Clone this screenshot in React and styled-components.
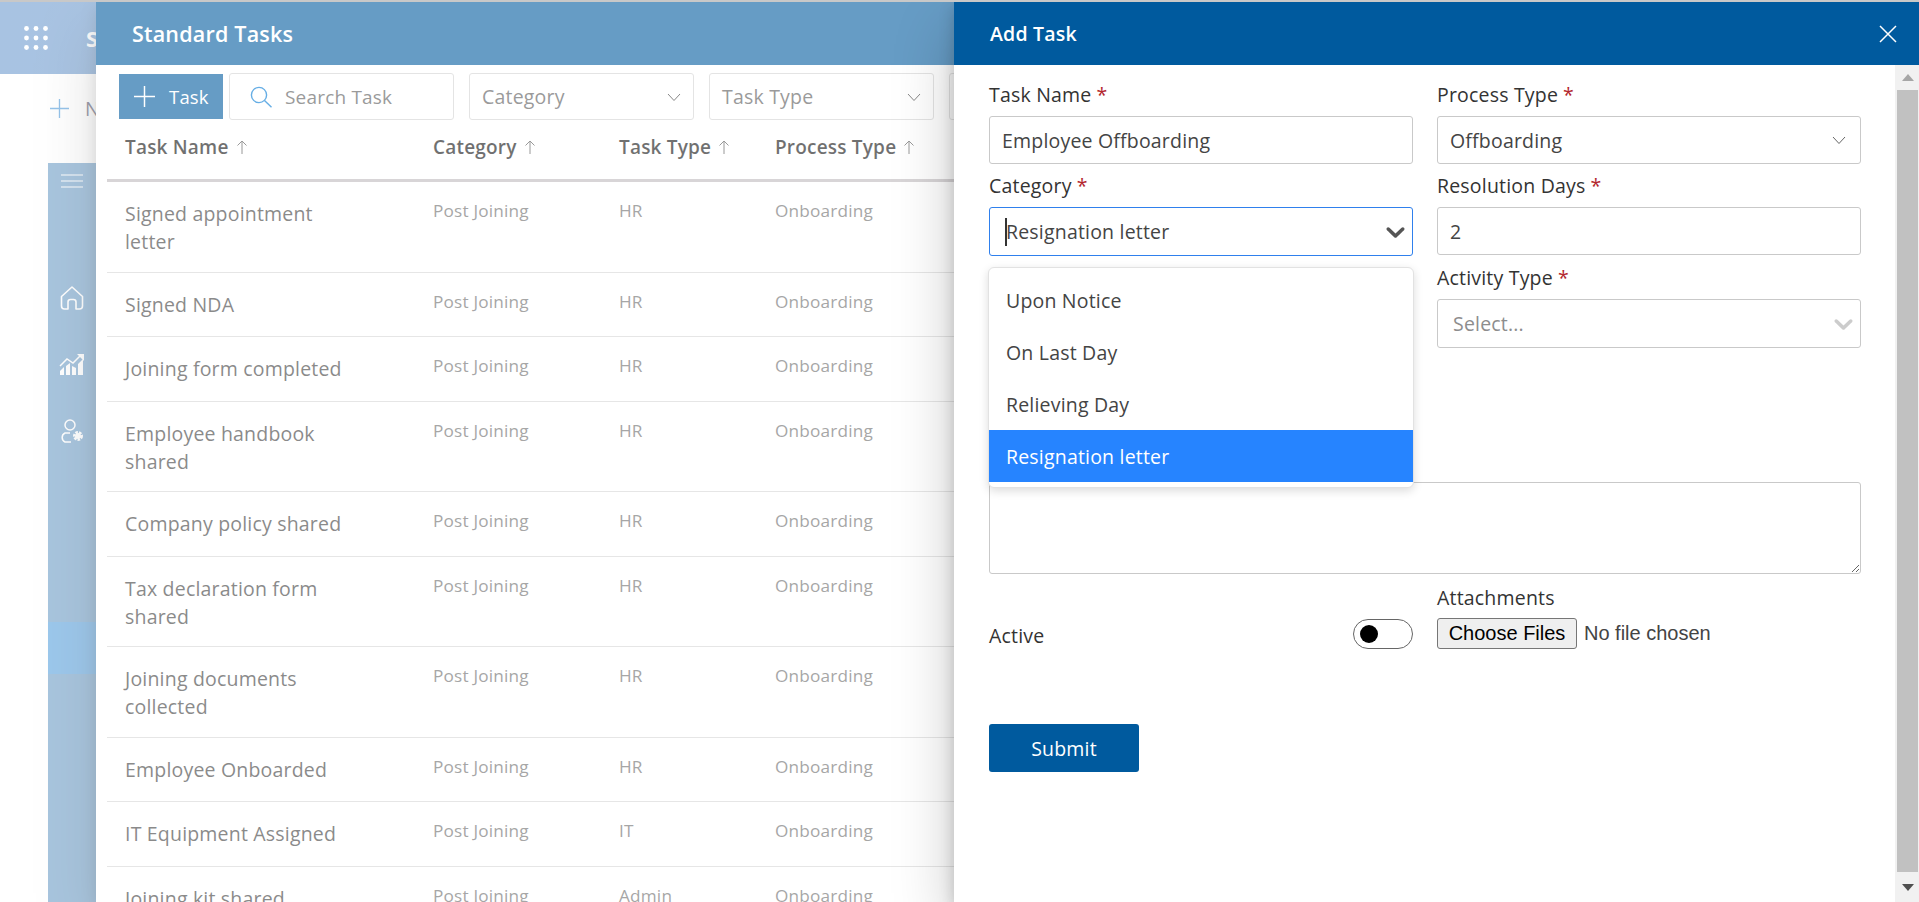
import styled, { createGlobalStyle } from 'styled-components';

const GlobalStyle = createGlobalStyle`
  * {
    box-sizing: border-box;
  }
  html,
  body {
    margin: 0;
    padding: 0;
    height: 100%;
    overflow: hidden;
    background: #fff;
    font-family: 'Open Sans', 'Noto Sans', sans-serif;
  }
`;

const FONT_SPACING = '0.012em';
const TEXT_SIZE = '19.5px';
const BRAND = '#005a9e';

const Page = styled.div`
  position: relative;
  width: 100%;
  height: 100vh;
  overflow: hidden;
  border-top: 2px solid #c8c8c8;
  display: flex;
  flex-direction: column;
  letter-spacing: ${FONT_SPACING};
`;

const AppBar = styled.div`
  height: 72px;
  flex: none;
  display: flex;
  align-items: center;
  gap: 38px;
  padding-left: 24px;
  background: linear-gradient(100deg, #6e9bcf, #8fb1da);
  color: #fff;
  font-weight: 700;
  font-size: 22px;
`;

const SubBar = styled.div`
  height: 89px;
  flex: none;
  display: flex;
  align-items: center;
  gap: 16px;
  padding: 0 0 20px 50px;
  color: #57576e;
  font-size: ${TEXT_SIZE};
`;

const SideRail = styled.div`
  flex: 1;
  width: 48px;
  margin-left: 48px;
  padding-top: 11px;
  background: #6e9ec8;
  display: flex;
  flex-direction: column;
`;

const RailToggle = styled.div`
  display: flex;
  justify-content: center;
  height: 14px;
  margin-bottom: 77px;
`;

const RailItem = styled.div`
  height: 66.5px;
  display: flex;
  align-items: center;
  justify-content: center;
`;

const RailActive = styled.div`
  height: 52px;
  margin-top: 157px;
  background: #5aa2df;
`;

const Panel = styled.section`
  position: absolute;
  top: 0;
  bottom: 0;
  left: ${(p) => p.$left}px;
  right: 0;
  background: #fff;
  display: flex;
  flex-direction: column;
  box-shadow: 0 25.6px 57.6px 0 rgba(0, 0, 0, 0.22), 0 4.8px 14.4px 0 rgba(0, 0, 0, 0.18);
`;

// white veil that the top panel puts over everything below it
const Scrim = styled.div`
  position: absolute;
  inset: 0;
  background: rgba(255, 255, 255, 0.4);
`;

const PanelHeader = styled.header`
  height: 63px;
  flex: none;
  display: flex;
  align-items: center;
  justify-content: space-between;
  padding: 0 ${(p) => p.$padRight}px 0 36px;
  background: ${BRAND};
  color: #fff;
`;

const PanelTitle = styled.h2`
  margin: 0;
  font-size: ${(p) => p.$size}px;
  font-weight: 600;
  line-height: 28px;
`;

const Toolbar = styled.div`
  display: flex;
  align-items: center;
  height: 47px;
  margin-top: 8px;
  padding-left: 23px;
`;

const AddButton = styled.button`
  width: 104px;
  height: 45px;
  margin-right: 6px;
  padding: 0 0 0 15px;
  border: 0;
  background: ${BRAND};
  color: #fff;
  font: inherit;
  font-size: 18.5px;
  letter-spacing: inherit;
  display: flex;
  align-items: center;
  gap: 14px;
`;

const SearchBox = styled.label`
  width: 225px;
  height: 47px;
  margin-right: 15px;
  padding-left: 20px;
  border: 1px solid #d2d2d2;
  border-radius: 3px;
  display: flex;
  align-items: center;
  gap: 13px;
`;

const SearchInput = styled.input`
  flex: 1;
  min-width: 0;
  border: 0;
  outline: 0;
  padding: 0;
  font: inherit;
  font-size: 19px;
  letter-spacing: inherit;
  &::placeholder {
    color: #575757;
    opacity: 1;
  }
`;

const FilterBox = styled.div`
  width: 225px;
  height: 47px;
  flex: none;
  margin-right: 15px;
  padding: 0 11px 0 12px;
  border: 1px solid #d2d2d2;
  border-radius: 3px;
  display: flex;
  align-items: center;
  justify-content: space-between;
  color: #575757;
  font-size: ${TEXT_SIZE};
`;

const Table = styled.div`
  margin-left: 11px;
  width: 848px;
`;

const Row = styled.div`
  display: grid;
  grid-template-columns: 308px 186px 156px 1fr;
  padding-left: 18px;
  min-height: 64.6px;
  border-bottom: 1px solid #d5d5d5;
`;

const HeadRow = styled(Row)`
  min-height: 0;
  height: 62px;
  align-items: center;
  padding-bottom: 6px;
  border-bottom: 3px solid #bfb9bc;
`;

const HeadCell = styled.div`
  display: flex;
  align-items: center;
  gap: 7px;
  color: #111;
  font-size: 19px;
  font-weight: 600;
`;

const NameCell = styled.div`
  width: 232px;
  padding: 18px 0 15.5px;
  color: #3c3c3c;
  font-size: ${TEXT_SIZE};
  line-height: 28px;
`;

const MetaCell = styled.div`
  padding-top: 17px;
  color: #6b6b6b;
  font-size: 17.2px;
  line-height: 24px;
`;

const PanelBody = styled.div`
  flex: 1;
  min-height: 0;
  display: flex;
`;

const Form = styled.form`
  flex: 1;
  min-width: 0;
  padding: 17px 0 0 35px;
`;

const FormGrid = styled.div`
  display: grid;
  grid-template-columns: 424px 424px;
  column-gap: 24px;
  row-gap: 9px;
`;

const Label = styled.label`
  display: block;
  margin-bottom: 8px;
  color: #333;
  font-size: ${TEXT_SIZE};
  font-weight: 500;
  line-height: 26px;
`;

const Required = styled.span`
  color: #b3262e;
  margin-left: 5px;
`;

const TextInput = styled.input`
  display: block;
  width: 100%;
  height: 48px;
  padding: 0 12px;
  border: 1px solid #c9c9c9;
  border-radius: 3px;
  outline: 0;
  color: #444;
  font: inherit;
  font-size: ${TEXT_SIZE};
  letter-spacing: inherit;
`;

const SelectBox = styled.div`
  height: ${(p) => (p.$tall ? 49 : 48)}px;
  padding: 0 ${(p) => p.$padRight}px 0 ${(p) => p.$padLeft}px;
  border: 1px solid ${(p) => (p.$focused ? '#2f80ed' : '#c9c9c9')};
  border-radius: 3px;
  display: flex;
  align-items: center;
  justify-content: space-between;
  color: ${(p) => (p.$muted ? '#8d8d8d' : '#444')};
  font-size: ${TEXT_SIZE};
`;

const Caret = styled.span`
  display: inline-block;
  width: 2px;
  height: 28px;
  margin-right: -1px;
  background: #333;
`;

const SelectValue = styled.span`
  display: flex;
  align-items: center;
`;

const Menu = styled.ul`
  position: absolute;
  top: 265px;
  left: 34px;
  width: 426px;
  height: 221px;
  margin: 0;
  padding: 6px 0;
  list-style: none;
  background: #fff;
  border: 1px solid #e2e2e2;
  border-radius: 6px;
  box-shadow: 0 3px 10px rgba(0, 0, 0, 0.14);
`;

const MenuItem = styled.li`
  height: 52px;
  padding-left: 17px;
  display: flex;
  align-items: center;
  color: ${(p) => (p.$selected ? '#fff' : '#444')};
  background: ${(p) => (p.$selected ? '#2684ff' : 'transparent')};
  font-size: ${TEXT_SIZE};
`;

const TextArea = styled.textarea`
  display: block;
  width: 872px;
  height: 92px;
  margin-top: 134px;
  border: 1px solid #c9c9c9;
  border-radius: 3px;
  outline: 0;
  resize: both;
`;

const BottomGrid = styled(FormGrid)`
  margin-top: 11px;
  align-items: end;
`;

const ActiveRow = styled.div`
  height: 31px;
  display: flex;
  align-items: center;
  justify-content: space-between;
  color: #333;
  font-size: ${TEXT_SIZE};
  font-weight: 500;
`;

const ActiveLabel = styled.span`
  padding-top: 3px;
`;

const Toggle = styled.span`
  width: 60px;
  height: 30px;
  padding-left: 6px;
  border: 1px solid #666;
  border-radius: 15px;
  display: flex;
  align-items: center;
`;

const ToggleDot = styled.span`
  width: 18px;
  height: 18px;
  border-radius: 50%;
  background: #000;
`;

const AttachLabel = styled(Label)`
  margin-bottom: 7px;
`;

const FileInput = styled.input`
  display: block;
  width: 424px;
  height: 31px;
  color: #444;
  font-family: 'Liberation Sans', Arial, sans-serif;
  font-size: 20px;
  letter-spacing: 0;
  &::file-selector-button {
    width: 140px;
    height: 31px;
    margin-right: 7px;
    padding: 0;
    border: 1px solid #767676;
    border-radius: 3px;
    background: #efefef;
    color: #000;
    font: inherit;
  }
`;

const SubmitButton = styled.button`
  display: block;
  width: 150px;
  height: 48px;
  margin-top: 75px;
  border: 0;
  border-radius: 3px;
  background: ${BRAND};
  color: #fff;
  font: inherit;
  font-size: 19.5px;
  letter-spacing: inherit;
`;

const ScrollTrack = styled.div`
  width: 24px;
  flex: none;
  display: flex;
  flex-direction: column;
  padding-left: 2px;
  background: #f1f1f1;
`;

const ScrollArrow = styled.div`
  height: ${(p) => p.$h}px;
  flex: none;
  display: flex;
  align-items: center;
  justify-content: center;
`;

const ScrollThumb = styled.div`
  flex: 1;
  margin-right: 1px;
  background: #c1c1c1;
`;

const Chevron = ({ color }) => (
  <svg width="16" height="16" viewBox="0 0 16 16" fill="none">
    <path d="M2 5l6 6.5L14 5" stroke={color} strokeWidth="1" />
  </svg>
);

const BoldChevron = ({ color }) => (
  <svg width="31" height="31" viewBox="0 0 20 20" fill={color}>
    <path d="M4.516 7.548c0.436-0.446 1.043-0.481 1.576 0l3.908 3.747 3.908-3.747c0.533-0.481 1.141-0.446 1.574 0 0.436 0.445 0.408 1.197 0 1.615-0.406 0.418-4.695 4.502-4.695 4.502-0.217 0.223-0.502 0.335-0.787 0.335s-0.57-0.112-0.789-0.335c0 0-4.287-4.084-4.695-4.502s-0.436-1.17 0-1.615z" />
  </svg>
);

const SortArrow = () => (
  <svg width="12" height="16" viewBox="0 0 12 16" fill="none">
    <path d="M6 15V2M1.5 6.5L6 2l4.500 4.500" stroke="#555" strokeWidth="1" />
  </svg>
);

const PlusIcon = ({ size, color }) => (
  <svg width={size} height={size} viewBox="0 0 20 20" fill="none">
    <path d="M10 0v20M0 10h20" stroke={color} strokeWidth="1.4" />
  </svg>
);

const SearchIcon = () => (
  <svg width="22" height="22" viewBox="0 0 22 22" fill="none" stroke="#0078d4" strokeWidth="1.4">
    <circle cx="9" cy="9" r="7.6" />
    <path d="M14.5 14.5l7 6.8" />
  </svg>
);

const CloseIcon = () => (
  <svg width="18" height="18" viewBox="0 0 18 18" fill="none">
    <path d="M1 1l16 16M17 1L1 17" stroke="#fff" strokeWidth="1.5" />
  </svg>
);

const WaffleIcon = () => (
  <svg width="24" height="24" viewBox="0 0 24 24" fill="#fff">
    {[2.5, 12, 21.5].map((y) =>
      [2.5, 12, 21.5].map((x) => <circle key={`${x}-${y}`} cx={x} cy={y} r="2.4" />)
    )}
  </svg>
);

const MenuIcon = () => (
  <svg width="22" height="14" viewBox="0 0 22 14" stroke="#fff" strokeWidth="1.2">
    <path d="M0 1h22M0 7h22M0 13h22" />
  </svg>
);

const HomeIcon = () => (
  <svg width="24" height="24" viewBox="0 0 24 24" fill="none" stroke="#fff" strokeWidth="1.6" strokeLinejoin="round">
    <path d="M1.5 10.5L12 1l10.500 9.500V20a3 3 0 0 1-3 3h-3.500v-7a2.500 2.500 0 0 0-2.500-2.500h-3A2.500 2.500 0 0 0 8 16v7H4.500a3 3 0 0 1-3-3z" />
  </svg>
);

const ChartIcon = () => (
  <svg width="26" height="22" viewBox="0 0 26 22" fill="#fff">
    <path d="M1 21v-4l4-4v8zM7 21V12l4-3v12zM13 21v-9l4 2v7zM19 21V10l5-5v16z" />
    <path d="M1 12l7-7 6 4 7-7" fill="none" stroke="#fff" strokeWidth="1.5" />
    <path d="M18 0h7v7z" />
  </svg>
);

const UserGearIcon = () => (
  <svg width="26" height="24" viewBox="0 0 26 24" fill="none" stroke="#fff" strokeWidth="1.5">
    <circle cx="11" cy="6" r="5" />
    <path d="M11 14H6a5 5 0 0 0 0 9h6" />
    <circle cx="19" cy="17" r="3.500" strokeWidth="3" strokeDasharray="2.400 1.000" />
    <circle cx="19" cy="17" r="3" fill="#fff" stroke="none" />
  </svg>
);

const tasks = [
  ['Signed appointment letter', 'HR'],
  ['Signed NDA', 'HR'],
  ['Joining form completed', 'HR'],
  ['Employee handbook shared', 'HR'],
  ['Company policy shared', 'HR'],
  ['Tax declaration form shared', 'HR'],
  ['Joining documents collected', 'HR'],
  ['Employee Onboarded', 'HR'],
  ['IT Equipment Assigned', 'IT'],
  ['Joining kit shared', 'Admin'],
];

const categories = ['Upon Notice', 'On Last Day', 'Relieving Day', 'Resignation letter'];

function App() {
  return (
    <>
      <GlobalStyle />
      <Page>
        <AppBar>
          <WaffleIcon />
          <span>S</span>
        </AppBar>
        <SubBar>
          <PlusIcon size={19} color="#4e9bdc" />
          <span>N</span>
        </SubBar>
        <SideRail>
          <RailToggle>
            <MenuIcon />
          </RailToggle>
          <RailItem>
            <HomeIcon />
          </RailItem>
          <RailItem>
            <ChartIcon />
          </RailItem>
          <RailItem>
            <UserGearIcon />
          </RailItem>
          <RailActive />
        </SideRail>

        <Panel $left={96}>
          <PanelHeader $padRight={20}>
            <PanelTitle $size={21.5}>Standard Tasks</PanelTitle>
          </PanelHeader>
          <Toolbar>
            <AddButton type="button">
              <PlusIcon size={21} color="#fff" />
              Task
            </AddButton>
            <SearchBox>
              <SearchIcon />
              <SearchInput placeholder="Search Task" />
            </SearchBox>
            <FilterBox>
              Category
              <Chevron color="#393939" />
            </FilterBox>
            <FilterBox>
              Task Type
              <Chevron color="#393939" />
            </FilterBox>
            <FilterBox />
          </Toolbar>
          <Table>
            <HeadRow>
              {['Task Name', 'Category', 'Task Type', 'Process Type'].map((title) => (
                <HeadCell key={title}>
                  {title}
                  <SortArrow />
                </HeadCell>
              ))}
            </HeadRow>
            {tasks.map(([name, type]) => (
              <Row key={name}>
                <NameCell>{name}</NameCell>
                <MetaCell>Post Joining</MetaCell>
                <MetaCell>{type}</MetaCell>
                <MetaCell>Onboarding</MetaCell>
              </Row>
            ))}
          </Table>
        </Panel>

        <Scrim />

        <Panel $left={954}>
          <PanelHeader $padRight={22}>
            <PanelTitle $size={19.5}>Add Task</PanelTitle>
            <CloseIcon />
          </PanelHeader>
          <PanelBody>
            <Form>
              <FormGrid>
                <div>
                  <Label>
                    Task Name<Required>*</Required>
                  </Label>
                  <TextInput readOnly value="Employee Offboarding" />
                </div>
                <div>
                  <Label>
                    Process Type<Required>*</Required>
                  </Label>
                  <SelectBox $padLeft={12} $padRight={13}>
                    Offboarding
                    <Chevron color="#666" />
                  </SelectBox>
                </div>
                <div>
                  <Label>
                    Category<Required>*</Required>
                  </Label>
                  <SelectBox $tall $focused $padLeft={15} $padRight={1}>
                    <SelectValue>
                      <Caret />
                      Resignation letter
                    </SelectValue>
                    <BoldChevron color="#555" />
                  </SelectBox>
                </div>
                <div>
                  <Label>
                    Resolution Days<Required>*</Required>
                  </Label>
                  <TextInput readOnly value="2" />
                </div>
                <div />
                <div>
                  <Label>
                    Activity Type<Required>*</Required>
                  </Label>
                  <SelectBox $tall $muted $padLeft={15} $padRight={1}>
                    Select...
                    <BoldChevron color="#ccc" />
                  </SelectBox>
                </div>
              </FormGrid>
              <TextArea />
              <BottomGrid>
                <ActiveRow>
                  <ActiveLabel>Active</ActiveLabel>
                  <Toggle>
                    <ToggleDot />
                  </Toggle>
                </ActiveRow>
                <div>
                  <AttachLabel>Attachments</AttachLabel>
                  <FileInput type="file" multiple />
                </div>
              </BottomGrid>
              <SubmitButton type="button">Submit</SubmitButton>
            </Form>
            <ScrollTrack>
              <ScrollArrow $h={25}>
                <svg width="12" height="7" viewBox="0 0 12 7" fill="#a6a6a6">
                  <path d="M6 0l6 7H0z" />
                </svg>
              </ScrollArrow>
              <ScrollThumb />
              <ScrollArrow $h={30}>
                <svg width="12" height="7" viewBox="0 0 12 7" fill="#505050">
                  <path d="M0 0h12L6 7z" />
                </svg>
              </ScrollArrow>
            </ScrollTrack>
            <Menu>
              {categories.map((item) => (
                <MenuItem key={item} $selected={item === 'Resignation letter'}>
                  {item}
                </MenuItem>
              ))}
            </Menu>
          </PanelBody>
        </Panel>
      </Page>
    </>
  );
}

export default App;
